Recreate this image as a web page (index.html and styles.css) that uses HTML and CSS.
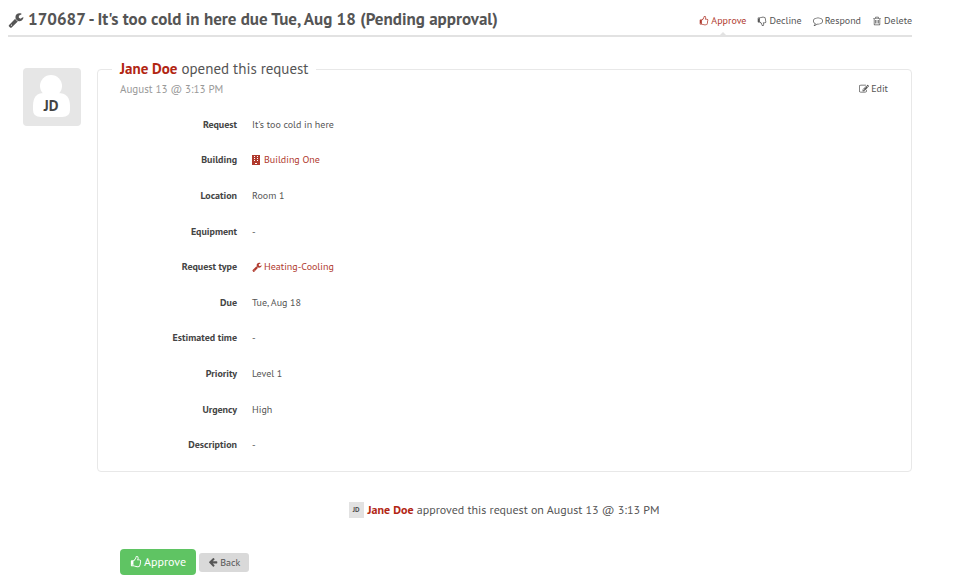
FILE: index.html
```html
<!DOCTYPE html>
<html lang="en">
<head>
    <meta charset="UTF-8">
    <meta name="viewport" content="width=device-width, initial-scale=1.0">
    <title>Request 170687</title>
    <link rel="stylesheet" href="styles.css">
</head>
<body>
    <!-- Icon set -->
    <svg class="sprite" aria-hidden="true">
        <symbol id="wrench" viewBox="0 0 1792 1792"><path d="M448 1472q0-26-19-45t-45-19-45 19-19 45 19 45 45 19 45-19 19-45zm644-420l-682 682q-37 37-90 37-52 0-91-37l-106-108q-38-36-38-90 0-53 38-91l681-681q39 98 114.5 173.5t173.5 114.5zm634-435q0 39-23 106-47 134-164.5 217.5t-258.5 83.5q-185 0-316.5-131.5t-131.5-316.5 131.5-316.5 316.5-131.5q58 0 121.5 16.5t107.5 46.5q16 11 16 28t-16 28l-293 169v224l193 107q5-3 79-48.5t135.5-81 70.5-35.5q15 0 23.5 10t8.5 25z"/></symbol>
        <symbol id="thumb" viewBox="0 0 1792 1792"><path d="M384 1344q0-26-19-45t-45-19-45 19-19 45 19 45 45 19 45-19 19-45zm1152-576q0-51-39-89.5t-89-38.5h-352q0-58 48-159.5t48-160.5q0-98-32-145t-128-47q-26 26-38 85t-30.5 125.5-59.5 109.5q-22 23-77 91-4 5-23 30t-31.5 41-34.5 42.5-40 44-38.5 35.5-40 27-35.5 9h-32v640h32q13 0 31.5 3t33 6.5 38 11 35 11.5 35.5 12.5 29 10.5q211 73 342 73h121q192 0 192-167 0-26-5-56 30-16 47.5-52.5t17.5-73.5-18-69q53-50 53-119 0-25-10-55.5t-25-47.5q32-1 53.5-47t21.5-81zm128-1q0 89-49 163 9 33 9 69 0 77-38 144 3 21 3 43 0 101-60 178 1 139-85 219.5t-227 80.5h-129q-96 0-189.5-22.5t-216.5-65.5q-116-40-138-40h-288q-53 0-90.5-37.5t-37.5-90.5v-640q0-53 37.5-90.5t90.5-37.5h274q36-24 137-155 58-75 107-128 24-25 35.5-85.5t30.5-126.5 62-108q39-37 90-37 84 0 151 32.5t102 101.5 35 186q0 93-48 192h176q104 0 180 76t76 179z"/></symbol>
        <symbol id="comment" viewBox="0 0 1792 1792"><path d="M896 384q-204 0-381.5 69.5t-282 187.5-104.5 255q0 112 71.5 213.5t201.5 175.5l87 50-27 96q-24 91-70 172 152-63 275-171l43-38 57 6q69 8 130 8 204 0 381.5-69.5t282-187.5 104.5-255-104.5-255-282-187.5-381.5-69.5zm896 512q0 174-120 321.5t-326 233-450 85.5q-70 0-145-8-198 175-460 242-49 14-114 22h-5q-15 0-27-10.5t-16-27.5v-1q-3-4-.5-12t2-10 4.5-9.5l6-9 7-8.5 8-9q7-8 31-34.5t34.5-38 31-39.5 32.5-51 27-59 26-76q-157-89-247.5-220t-90.5-281q0-174 120-321.5t326-233 450-85.5 450 85.5 326 233 120 321.5z"/></symbol>
        <symbol id="trash" viewBox="0 0 1792 1792"><path d="M704 736v576q0 14-9 23t-23 9h-64q-14 0-23-9t-9-23v-576q0-14 9-23t23-9h64q14 0 23 9t9 23zm256 0v576q0 14-9 23t-23 9h-64q-14 0-23-9t-9-23v-576q0-14 9-23t23-9h64q14 0 23 9t9 23zm256 0v576q0 14-9 23t-23 9h-64q-14 0-23-9t-9-23v-576q0-14 9-23t23-9h64q14 0 23 9t9 23zm128 724v-948h-896v948q0 22 7 40.5t14.5 27 10.5 8.5h832q3 0 10.5-8.5t14.5-27 7-40.5zm-672-1076h448l-48-117q-7-9-17-11h-317q-10 2-17 11zm928 32v64q0 14-9 23t-23 9h-96v948q0 83-47 143.5t-113 60.5h-832q-66 0-113-58.5t-47-141.5v-952h-96q-14 0-23-9t-9-23v-64q0-14 9-23t23-9h309l70-167q15-37 54-63t79-26h320q40 0 79 26t54 63l70 167h309q14 0 23 9t9 23z"/></symbol>
        <symbol id="edit" viewBox="0 0 1792 1792"><path d="M888 1184l116-116-152-152-116 116v56h96v96h56zm440-720q-16-16-33 1l-350 350q-17 17-1 33t33-1l350-350q17-17 1-33zm80 594v190q0 119-84.5 203.5t-203.5 84.5h-832q-119 0-203.5-84.5t-84.5-203.5v-832q0-119 84.5-203.5t203.5-84.5h832q63 0 117 25 15 7 18 23 3 17-9 29l-49 49q-14 14-32 8-23-6-45-6h-832q-66 0-113 47t-47 113v832q0 66 47 113t113 47h832q66 0 113-47t47-113v-126q0-13 9-22l64-64q15-15 35-7t20 29zm-96-738l288 288-672 672h-288v-288zm444 132l-92 92-288-288 92-92q28-28 68-28t68 28l152 152q28 28 28 68t-28 68z"/></symbol>
        <symbol id="back" viewBox="0 0 1792 1792"><path d="M1664 896v128q0 53-32.5 90.5t-84.5 37.5h-704l293 294q38 36 38 90t-38 90l-75 76q-37 37-90 37-52 0-91-37l-651-652q-37-37-37-90 0-52 37-91l651-650q38-38 91-38 52 0 90 38l75 74q38 38 38 91t-38 91l-293 293h704q52 0 84.5 37.5t32.5 90.5z"/></symbol>
        <symbol id="building" viewBox="0 0 10 10"><path fill-rule="evenodd" d="M0 0h8v10H5V8H3v2H0zM2 1v1h1V1zM5 1v1h1V1zM2 3v1h1V3zM5 3v1h1V3zM2 5v1h1V5zM5 5v1h1V5z"/><path d="M0 9h8v1H0z"/></symbol>
    </svg>

    <header class="page-header">
        <h1><svg class="icon"><use href="#wrench"/></svg>170687 - It's too cold in here due Tue, Aug 18 (Pending approval)</h1>
        <nav class="actions">
            <a href="#" class="active"><svg class="icon"><use href="#thumb"/></svg>Approve</a>
            <a href="#"><svg class="icon flip"><use href="#thumb"/></svg>Decline</a>
            <a href="#"><svg class="icon"><use href="#comment"/></svg>Respond</a>
            <a href="#"><svg class="icon"><use href="#trash"/></svg>Delete</a>
        </nav>
    </header>

    <main>
        <section class="request">
            <svg class="avatar" viewBox="0 0 58 58" role="img">
                <circle cx="28" cy="18" r="11"/>
                <path d="M21 25h14q12 0 12 13v4q0 7-8 7H18q-8 0-8-7v-4q0-13 11-13z"/>
                <text x="28" y="43" text-anchor="middle">JD</text>
            </svg>

            <fieldset class="card">
                <legend><a href="#">Jane Doe</a> opened this request</legend>
                <div class="meta">
                    <time>August 13 @ 3:13 PM</time>
                    <a href="#" class="edit"><svg class="icon"><use href="#edit"/></svg>Edit</a>
                </div>
                <dl class="details">
                    <dt>Request</dt>
                    <dd>It's too cold in here</dd>
                    <dt>Building</dt>
                    <dd><a href="#"><svg class="icon"><use href="#building"/></svg>Building One</a></dd>
                    <dt>Location</dt>
                    <dd>Room 1</dd>
                    <dt>Equipment</dt>
                    <dd>-</dd>
                    <dt>Request type</dt>
                    <dd><a href="#"><svg class="icon"><use href="#wrench"/></svg>Heating-Cooling</a></dd>
                    <dt>Due</dt>
                    <dd>Tue, Aug 18</dd>
                    <dt>Estimated time</dt>
                    <dd>-</dd>
                    <dt>Priority</dt>
                    <dd>Level 1</dd>
                    <dt>Urgency</dt>
                    <dd>High</dd>
                    <dt>Description</dt>
                    <dd>-</dd>
                </dl>
            </fieldset>
        </section>

        <p class="history"><span class="badge">JD</span><span><a href="#">Jane Doe</a> approved this request on August 13 @ 3:13 PM</span></p>

        <div class="buttons">
            <button type="button" class="btn-approve"><svg class="icon"><use href="#thumb"/></svg>Approve</button>
            <button type="button" class="btn-back"><svg class="icon"><use href="#back"/></svg>Back</button>
        </div>
    </main>
</body>
</html>
```

FILE: styles.css
```css
* {
    box-sizing: border-box;
}
body {
    margin: 0;
    padding: 0 48px 0 8px;
    background: #fff;
    color: #555;
    font-family: "PT Sans", Lato, sans-serif;
    font-size: 10px;
    line-height: 16px;
}
a {
    color: #b03a2e;
    text-decoration: none;
}
a:hover {
    text-decoration: underline;
}
.sprite {
    display: none;
}
.icon {
    width: 10px;
    height: 10px;
    margin-right: 2px;
    fill: currentColor;
    flex: none;
}
.flip {
    transform: scaleY(-1);
}

/* Header */
.page-header {
    display: flex;
    justify-content: space-between;
    align-items: center;
    padding: 5px 0 1px;
    border-bottom: 2px solid #e2e2e2;
}
h1 {
    display: flex;
    align-items: center;
    margin: 0;
    font-size: 17px;
    line-height: 29px;
}
h1 .icon {
    width: 16px;
    height: 16px;
    margin-right: 4px;
}
.actions {
    display: flex;
    gap: 11px;
}
.actions a, .edit {
    position: relative;
    display: flex;
    align-items: center;
    color: #555;
}
.actions .active {
    color: #b03a2e;
}
.actions a {
    padding: 8px 0 5px;
}
/* Small pointer on the header line */
.actions .active::after {
    content: '';
    position: absolute;
    left: 50%;
    bottom: -1px;
    margin-left: -3px;
    border: 3px solid transparent;
    border-top-width: 0;
    border-bottom-color: #e2e2e2;
}

/* Request */
.request {
    display: flex;
    align-items: flex-start;
    padding: 23px 0 0 15px;
}
.avatar {
    width: 58px;
    height: 58px;
    margin: 8px 16px 0 0;
    background: #e6e6e6;
    border-radius: 4px;
    fill: #fff;
    flex: none;
}
.avatar text {
    fill: #444;
    font-size: 15px;
    font-weight: bold;
}
.card {
    flex: 1;
    min-width: 0;
    margin: 0;
    padding: 0 23px 8px 14px;
    border: 1px solid #e8e8e8;
    border-radius: 4px;
}
legend {
    padding: 0 8px;
    font-size: 15px;
    line-height: 18px;
}
legend a, .history a {
    color: #b22613;
    font-weight: bold;
}
.meta {
    display: flex;
    justify-content: space-between;
    padding: 3px 0 10px 8px;
}
.meta time {
    color: #999;
    font-size: 11px;
}
.details {
    display: grid;
    grid-template-columns: 117px 1fr;
    grid-auto-rows: 1fr;
    column-gap: 15px;
    align-items: center;
    min-height: 356px;
    margin: 0;
    padding-left: 8px;
}
dt {
    color: #444;
    font-weight: bold;
    text-align: right;
}
dd {
    margin: 0;
}
dd a {
    display: flex;
    align-items: center;
}

/* History */
.history {
    display: flex;
    justify-content: center;
    align-items: center;
    gap: 4px;
    margin: 30px 0 31px;
    padding-left: 88px;
    font-size: 12px;
}
.badge {
    width: 15px;
    background: #e2e2e2;
    color: #555;
    font-size: 7px;
    font-weight: bold;
    text-align: center;
}

/* Buttons */
.buttons {
    display: flex;
    align-items: center;
    gap: 3px;
    padding-left: 112px;
}
button {
    display: flex;
    align-items: center;
    border: 0;
    border-radius: 3px;
    font-family: inherit;
    cursor: pointer;
}
.btn-approve {
    padding: 5px 10px;
    background: #5fc463;
    color: #fff;
    font-size: 12px;
    line-height: 16px;
    border-radius: 4px;
}
.btn-back {
    padding: 2px 9px;
    background: #d9d9d9;
    color: #555;
    font-size: 10px;
    line-height: 15px;
}
.btn-approve .icon {
    width: 12px;
    height: 12px;
}
```
